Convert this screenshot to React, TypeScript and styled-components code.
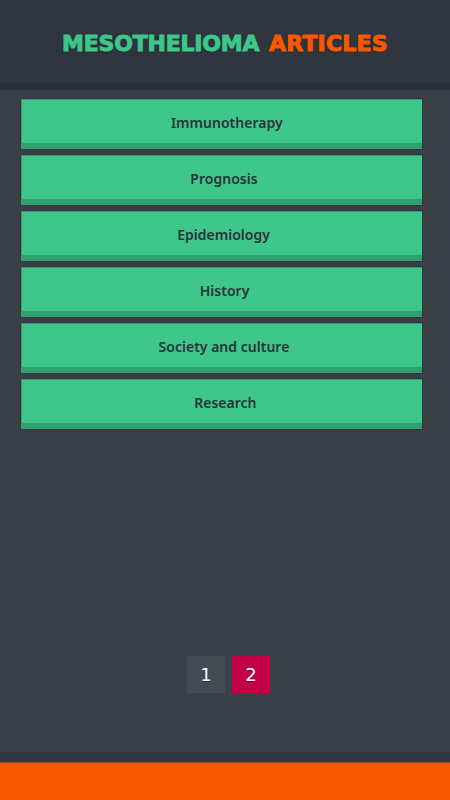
import React from "react";
import styled, { createGlobalStyle } from "styled-components";

const Global = createGlobalStyle`
  * { box-sizing: border-box; }
  body { margin: 0; background: #394047; }
`;

const Screen = styled.div`
  width: 450px;
  height: 800px;
  display: flex;
  flex-direction: column;
  background: #394047;
  overflow: hidden;
  font-family: "Noto Sans", sans-serif;
`;

const Header = styled.header`
  height: 90px;
  flex: none;
  padding-top: 28px;
  background: #30363e;
  border-bottom: 7px solid #293037;
`;

const Title = styled.h1`
  margin: 0 0 0 62px;
  display: flex;
  gap: 9px;
  font: 900 22px/31px "DejaVu Sans", sans-serif;
  white-space: nowrap;
  text-shadow: 0 0 2px #222a32, 0 1px 2px #222a32;
`;

const Word = styled.span<{ $color: string; $spacing: number; $width: number }>`
  width: ${(p) => p.$width}px;
  color: ${(p) => p.$color};
  letter-spacing: ${(p) => p.$spacing}px;
  -webkit-text-stroke: 1px ${(p) => p.$color};
`;

const List = styled.nav`
  display: grid;
  grid-auto-rows: 50px;
  row-gap: 6px;
  margin: 9px 28px 0 21px;
`;

const Item = styled.button<{ $shift: number }>`
  border: 0;
  padding: 0 0 4px ${(p) => p.$shift}px;
  background: #3fc68a;
  color: #29333c;
  font: 600 15px/20px "Noto Sans", sans-serif;
  box-shadow: inset 0 -6px #329f6e, inset 1px 1px #47946f, 0 0 0 1px #343640;
`;

const Label = styled.span`
  display: inline-block;
  transform: scaleX(0.935);
`;

const Pager = styled.div`
  display: flex;
  gap: 7px;
  margin: auto 0 59px 187px;
`;

const Page = styled.button<{ $active?: boolean }>`
  width: 38px;
  height: 37px;
  border: 0;
  padding: 0;
  background: ${(p) => (p.$active ? "#c30046" : "#434c55")};
  box-shadow: ${(p) => (p.$active ? "0 1px #a90843" : "none")};
  color: #fff;
  font: 400 18px/37px "DejaVu Sans", sans-serif;
  text-shadow: 0 1px 1px rgba(0, 0, 0, 0.4);
`;

const Footer = styled.footer`
  height: 48px;
  flex: none;
  background: #f85800;
  border-top: 10px solid #30363e;
  box-shadow: inset 0 1px #8d4b2b;
`;

const items = [
  { label: "Immunotherapy", shift: 11 },
  { label: "Prognosis", shift: 4 },
  { label: "Epidemiology", shift: 4 },
  { label: "History", shift: 7 },
  { label: "Society and culture", shift: 4 },
  { label: "Research", shift: 7 },
];

export default function App() {
  return (
    <Screen>
      <Global />
      <Header>
        <Title>
          <Word $color="#3fc68a" $spacing={-0.2} $width={198}>MESOTHELIOMA</Word>
          <Word $color="#f85800" $spacing={0.2} $width={120}>ARTICLES</Word>
        </Title>
      </Header>
      <List>
        {items.map((item) => (
          <Item key={item.label} $shift={item.shift}>
            <Label>{item.label}</Label>
          </Item>
        ))}
      </List>
      <Pager>
        <Page>1</Page>
        <Page $active>2</Page>
      </Pager>
      <Footer />
    </Screen>
  );
}
